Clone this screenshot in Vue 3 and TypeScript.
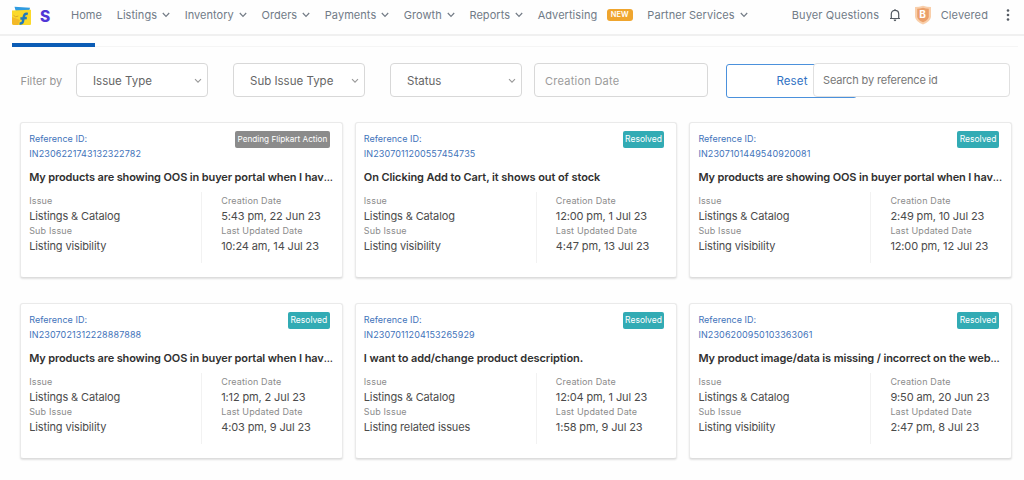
<script setup lang="ts">
interface NavItem { label: string; menu?: boolean; badge?: string }
interface Ticket {
  id: string
  title: string
  clipped?: boolean
  status: string
  subIssue: string
  created: string
  updated: string
}

const nav: NavItem[] = [
  { label: 'Home' },
  { label: 'Listings', menu: true },
  { label: 'Inventory', menu: true },
  { label: 'Orders', menu: true },
  { label: 'Payments', menu: true },
  { label: 'Growth', menu: true },
  { label: 'Reports', menu: true },
  { label: 'Advertising', badge: 'NEW' },
  { label: 'Partner Services', menu: true },
]

const filters: string[] = ['Issue Type', 'Sub Issue Type', 'Status']

const tickets: Ticket[] = [
  { id: 'IN2306221743132322782', title: 'My products are showing OOS in buyer portal when I hav', clipped: true, status: 'Pending Flipkart Action', subIssue: 'Listing visibility', created: '5:43 pm, 22 Jun 23', updated: '10:24 am, 14 Jul 23' },
  { id: 'IN2307011200557454735', title: 'On Clicking Add to Cart, it shows out of stock', status: 'Resolved', subIssue: 'Listing visibility', created: '12:00 pm, 1 Jul 23', updated: '4:47 pm, 13 Jul 23' },
  { id: 'IN2307101449540920081', title: 'My products are showing OOS in buyer portal when I hav', clipped: true, status: 'Resolved', subIssue: 'Listing visibility', created: '2:49 pm, 10 Jul 23', updated: '12:00 pm, 12 Jul 23' },
  { id: 'IN2307021312228887888', title: 'My products are showing OOS in buyer portal when I hav', clipped: true, status: 'Resolved', subIssue: 'Listing visibility', created: '1:12 pm, 2 Jul 23', updated: '4:03 pm, 9 Jul 23' },
  { id: 'IN2307011204153265929', title: 'I want to add/change product description.', status: 'Resolved', subIssue: 'Listing related issues', created: '12:04 pm, 1 Jul 23', updated: '1:58 pm, 9 Jul 23' },
  { id: 'IN2306200950103363061', title: 'My product image/data is missing / incorrect on the web', clipped: true, status: 'Resolved', subIssue: 'Listing visibility', created: '9:50 am, 20 Jun 23', updated: '2:47 pm, 8 Jul 23' },
]
</script>

<template>
  <div class="page">
    <header class="topbar">
      <svg class="logo" viewBox="0 0 20 20" width="20" height="20">
        <path d="M2.5 .8 L18 1.8 L17 6 L4 6 Z" fill="#2f9be0" />
        <path d="M0 4.5 L19 3.8 L19 18 Q19 19 18 19 L2 19 Q0 19 0 17 Z" fill="#fbd92a" />
        <path d="M0 11 L8 14 L6 19 L2 19 Q0 19 0 17 Z" fill="#f3b927" />
        <path d="M15.8 8 C12.8 7.2 12.2 8.8 11.8 10.8 L10.9 15.5 Q10.4 18 7.6 17.3 M8.4 12.4 L14.8 12" fill="none" stroke="#2079bd" stroke-width="2.5" />
        <path d="M1.5 9.3 Q3.5 12 6.3 10" fill="none" stroke="#dda52a" stroke-width="1" />
      </svg>
      <span class="brand">S</span>
      <nav class="nav">
        <a v-for="item in nav" :key="item.label" class="nav-item">
          <span>{{ item.label }}</span>
          <svg v-if="item.menu" class="chev" viewBox="0 0 8 6" width="8" height="6"><path d="M.8 1 L4 4.4 L7.2 1" /></svg>
          <span v-if="item.badge" class="new">{{ item.badge }}</span>
        </a>
      </nav>
      <div class="account">
        <span class="questions">Buyer Questions</span>
        <svg class="bell" viewBox="0 0 12 14" width="12" height="14">
          <path d="M1 10.5 H11 M2.3 10.5 V6 C2.3 1.2 9.7 1.2 9.7 6 V10.5 M6 1 V2.4" fill="none" stroke="#555b63" stroke-width="1.2" />
          <path d="M4.6 11.6 H7.4 Q7.2 13.2 6 13.2 Q4.8 13.2 4.6 11.6Z" fill="#555b63" />
        </svg>
        <span class="shield">
          <svg viewBox="0 0 18 20" width="18" height="20">
            <path d="M1 2 Q5 2 9 .8 Q13 2 17 2 V12 Q16 17 9 19.5 Q2 17 1 12 Z" fill="#f9cfab" />
            <path d="M3.2 3.7 Q6 3.7 9 2.8 Q12 3.7 14.8 3.7 V12 Q14 15.3 9 17.2 Q4 15.3 3.2 12 Z" fill="#eba06a" />
          </svg>
          <b>B</b>
        </span>
        <span class="seller">Clevered</span>
        <svg class="dots" viewBox="0 0 4 14" width="4" height="14"><circle cx="2" cy="2.5" r="1.3" /><circle cx="2" cy="7" r="1.3" /><circle cx="2" cy="11.5" r="1.3" /></svg>
      </div>
    </header>

    <div class="tabs"><div class="active-tab"></div></div>

    <section class="filters">
      <span class="filter-label">Filter by</span>
      <div v-for="f in filters" :key="f" class="select">
        <span>{{ f }}</span>
        <svg class="chev" viewBox="0 0 8 6" width="8" height="6"><path d="M1 1.2 L4 4.2 L7 1.2" /></svg>
      </div>
      <div class="date">Creation Date</div>
      <button class="reset">Reset</button>
      <div class="search">Search by reference id</div>
    </section>

    <main class="cards">
      <article v-for="t in tickets" :key="t.id" class="card">
        <div class="card-head">
          <div class="ref"><div class="ref-label">Reference ID:</div><div>{{ t.id }}</div></div>
          <span class="status" :class="{ pending: t.status !== 'Resolved' }">{{ t.status }}</span>
        </div>
        <h3 :class="{ short: !t.clipped }">{{ t.title }}<span v-if="t.clipped" class="more">...</span></h3>
        <div class="details">
          <dl class="left"><dt>Issue</dt><dd>Listings &amp; Catalog</dd><dt>Sub Issue</dt><dd>{{ t.subIssue }}</dd></dl>
          <dl class="right"><dt>Creation Date</dt><dd>{{ t.created }}</dd><dt>Last Updated Date</dt><dd>{{ t.updated }}</dd></dl>
        </div>
      </article>
    </main>
  </div>
</template>

<style>
body { margin: 0; background: #fff; overflow: hidden; }
</style>

<style scoped>
* { box-sizing: border-box; }
.page { width: 1024px; height: 480px; background: #fefefe; font-family: Inter, "Liberation Sans", sans-serif; overflow: hidden; white-space: nowrap; }
.topbar { height: 36px; border-bottom: 2px solid #f0f0f0; display: flex; align-items: center; padding: 0 14px 4px 12px; color: #717b87; font-size: 11px; letter-spacing: .05px; }
.logo { width: 20px; flex: none; margin-top: 1px; }
.brand { width: 39px; padding-left: 8px; margin-top: 2px; font-size: 15.5px; font-weight: 800; color: #5137d6; letter-spacing: 0; }
.nav { display: flex; gap: 14.6px; flex: 1; }
.nav-item { display: flex; align-items: center; gap: 5px; }
.chev { fill: none; stroke: #747c86; stroke-width: 1.2; flex: none; }
.new { margin-left: 4.5px; width: 26px; height: 12px; border-radius: 3px; background: #efa52e; color: #fff; font-size: 7.5px; font-weight: 600; line-height: 12px; text-align: center; }
.account { display: flex; align-items: center; letter-spacing: .12px; }
.bell { margin-left: 9.5px; }
.shield { position: relative; width: 18px; height: 20px; margin-left: 13px; }
.shield b { position: absolute; inset: 0; color: #fff; font-size: 10px; line-height: 19px; text-align: center; letter-spacing: 0; }
.seller { margin-left: 9px; }
.dots { margin-left: 18px; fill: #555b63; }
.tabs { height: 11px; margin: 0 6px 0 12px; border-bottom: 1px solid #f5f5f5; display: flex; align-items: flex-end; }
.active-tab { width: 83px; height: 4px; margin-bottom: -1px; background: #0b5cb5; }
.filters { height: 75px; padding: 16px 14px 0 20px; display: flex; align-items: flex-start; }
.filter-label { width: 56px; padding-left: .5px; line-height: 36px; font-size: 11px; color: #969696; letter-spacing: -.02px; }
.select { width: 132px; height: 34px; margin-right: 25px; border: 1px solid #d8d8d8; border-radius: 4px; padding: 1px 5px 0 16px; display: flex; align-items: center; justify-content: space-between; font-size: 11.5px; color: #666; background: #fff; }
.select .chev { stroke: #999; stroke-width: 1.1; }
.date { width: 174px; height: 34px; margin-left: -13px; border: 1px solid #d8d8d8; border-radius: 4px; padding-left: 10px; line-height: 34px; font-size: 11px; letter-spacing: .25px; color: #9b9b9b; }
.reset { width: 131px; height: 34px; margin: 1px 0 0 18px; border: 1px solid #4b91dc; border-radius: 3px; background: #fff; color: #3373c4; font: 11.5px/32px Inter, sans-serif; letter-spacing: .15px; padding: 0 0 0 1px; }
.search { width: 197px; height: 34px; margin-left: -44px; border: 1px solid #e0e0e0; border-radius: 4px; background: #fff; padding-left: 9px; line-height: 33px; font-size: 11px; letter-spacing: -.15px; color: #777; z-index: 1; }
.cards { display: grid; grid-template-columns: repeat(3, 322.6px); column-gap: 12px; row-gap: 25px; padding-left: 20.2px; }
.card { height: 156px; padding: 8px 8px; border: 1px solid #eaeaea; border-bottom-color: #ddd; border-radius: 3px; box-shadow: 0 1px 2px rgba(0,0,0,.12); background: #fff; }
.card-head { display: flex; justify-content: space-between; height: 32px; }
.ref { font-size: 9px; line-height: 15px; color: #3f73ba; letter-spacing: .12px; }
.ref-label { letter-spacing: .03px; }
.status { height: 17px; margin-right: 4px; padding: 0 2.5px; border-radius: 2px; background: #32abb4; color: #fff; font-size: 8.5px; line-height: 17px; }
.status.pending { background: #8b8b8b; font-size: 8.2px; }
h3 { margin: 6px 0 0; font-size: 11px; line-height: 16px; font-weight: 600; color: #303030; letter-spacing: -.125px; }
h3.short { letter-spacing: -.08px; }
.more { font-weight: 400; }
.details { display: flex; margin-top: 7px; }
dl { margin: 0; height: 71px; }
.left { width: 173px; border-right: 1px solid #f2f2f2; }
.right { padding-left: 19px; }
dt { font-size: 9px; line-height: 15px; color: #8b8b8b; letter-spacing: .15px; padding-top: 1px; height: 15px; }
dd { margin: 0; font-size: 11px; line-height: 15px; padding-top: 2px; height: 15px; color: #4b4b4b; letter-spacing: -.13px; }
</style>
